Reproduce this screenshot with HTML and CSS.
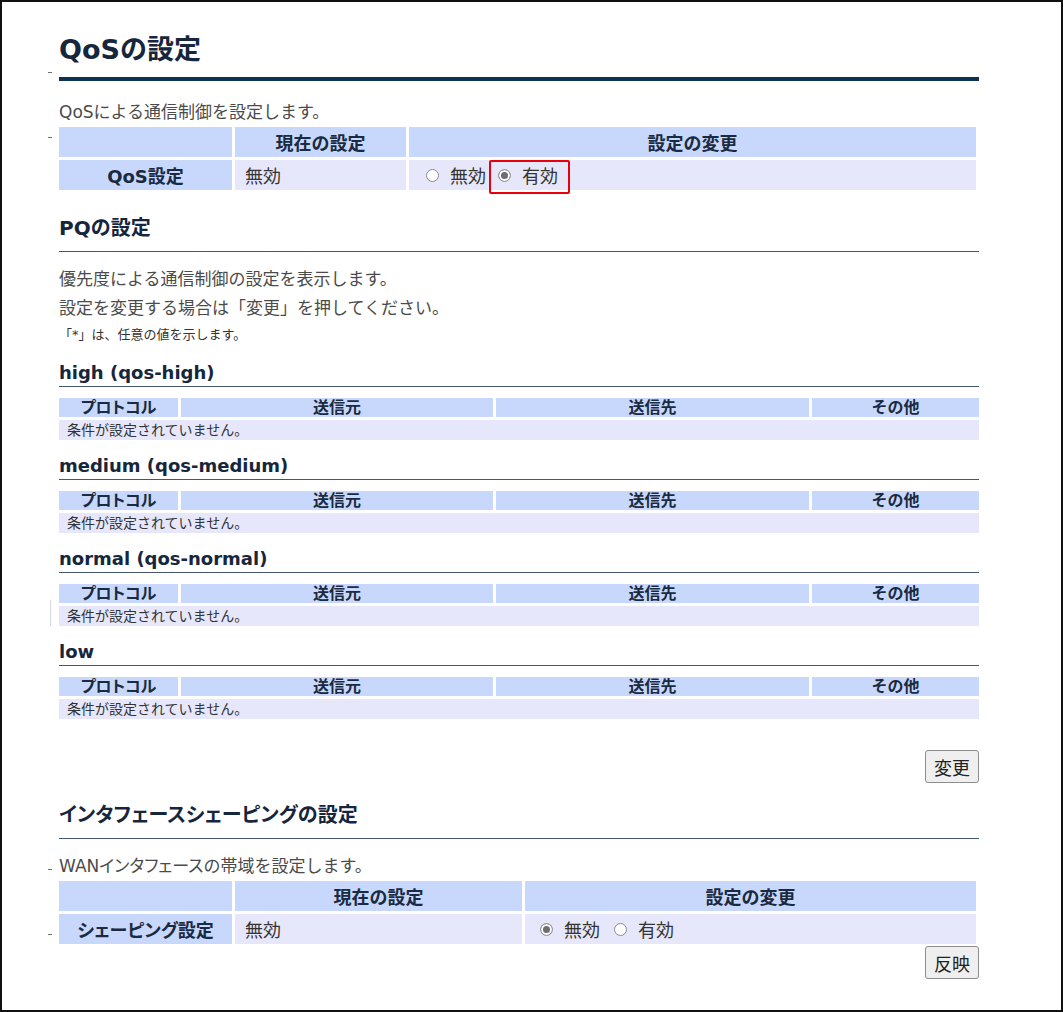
FILE: index.html
```html
<!DOCTYPE html>
<html lang="ja">
<head>
<meta charset="utf-8">
<title>QoSの設定</title>
<link rel="stylesheet" href="styles.css">
</head>
<body>
<div class="frame">
  <main class="page">
    <h1 class="title"><span class="tick tick-title"></span>QoSの設定</h1>
    <p class="desc">QoSによる通信制御を設定します。</p>
    <table class="grid grid-qos">
      <colgroup><col class="q1"><col class="q2"><col class="q3"></colgroup>
      <tr class="hrow"><th><span class="tick tick-row"></span></th><th>現在の設定</th><th>設定の変更</th></tr>
      <tr class="drow">
        <th>QoS設定</th>
        <td>無効</td>
        <td>
          <div class="choices">
            <label class="opt"><input type="radio" name="qos">無効</label>
            <label class="opt highlight"><input type="radio" name="qos" checked>有効</label>
          </div>
        </td>
      </tr>
    </table>

    <h2 class="sub">PQの設定</h2>
    <p class="lines">優先度による通信制御の設定を表示します。<br>設定を変更する場合は「変更」を押してください。</p>
    <p class="note">「*」は、任意の値を示します。</p>

    <h3 class="level first">high (qos-high)</h3>
    <table class="grid grid-pq">
      <colgroup><col class="p1"><col class="p2"><col class="p3"><col class="p4"></colgroup>
      <tr class="hrow"><th><span class="kana">プロトコル</span></th><th>送信元</th><th>送信先</th><th>その他</th></tr>
      <tr class="drow"><td colspan="4">条件が設定されていません。</td></tr>
    </table>

    <h3 class="level">medium (qos-medium)</h3>
    <table class="grid grid-pq">
      <colgroup><col class="p1"><col class="p2"><col class="p3"><col class="p4"></colgroup>
      <tr class="hrow"><th><span class="kana">プロトコル</span></th><th>送信元</th><th>送信先</th><th>その他</th></tr>
      <tr class="drow"><td colspan="4">条件が設定されていません。</td></tr>
    </table>

    <h3 class="level">normal (qos-normal)</h3>
    <table class="grid grid-pq">
      <colgroup><col class="p1"><col class="p2"><col class="p3"><col class="p4"></colgroup>
      <tr class="hrow"><th><span class="kana">プロトコル</span></th><th>送信元</th><th>送信先</th><th>その他</th></tr>
      <tr class="drow"><td colspan="4"><span class="vline"></span>条件が設定されていません。</td></tr>
    </table>

    <h3 class="level">low</h3>
    <table class="grid grid-pq">
      <colgroup><col class="p1"><col class="p2"><col class="p3"><col class="p4"></colgroup>
      <tr class="hrow"><th><span class="kana">プロトコル</span></th><th>送信元</th><th>送信先</th><th>その他</th></tr>
      <tr class="drow"><td colspan="4">条件が設定されていません。</td></tr>
    </table>

    <div class="actions actions-change"><button type="button" class="btn">変更</button></div>

    <h2 class="sub sub-shaping"><span class="kana">インタフェースシェーピング</span>の設定</h2>
    <p class="desc desc-wan"><span class="tick tick-desc"></span>WAN<span class="kana">インタフェース</span>の帯域を設定します。</p>
    <table class="grid grid-shape">
      <colgroup><col class="s1"><col class="s2"><col class="s3"></colgroup>
      <tr class="hrow"><th></th><th>現在の設定</th><th>設定の変更</th></tr>
      <tr class="drow">
        <th><span class="tick tick-drow"></span><span class="kana">シェーピング</span>設定</th>
        <td>無効</td>
        <td>
          <div class="choices">
            <label class="opt"><input type="radio" name="shape" checked>無効</label>
            <label class="opt"><input type="radio" name="shape">有効</label>
          </div>
        </td>
      </tr>
    </table>
    <div class="actions actions-apply"><button type="button" class="btn">反映</button></div>
  </main>
</div>
</body>
</html>
```

FILE: styles.css
```css
html, body {
  margin: 0;
  padding: 0;
  background: #ffffff;
}

body {
  font-family: "DejaVu Sans", "Noto Sans CJK JP", sans-serif;
  color: #333333;
}

.kana {
  font-feature-settings: "palt";
}

.frame {
  box-sizing: border-box;
  width: 1063px;
  height: 1012px;
  border: 2px solid #111111;
  overflow: hidden;
}

.page {
  width: 920px;
  margin-left: 57px;
  padding-top: 30px;
}

.tick {
  position: absolute;
  left: -11px;
  width: 4px;
  height: 1px;
  background: #6f6f6f;
}

.title {
  position: relative;
  margin: 0;
  font-size: 27px;
  line-height: 36px;
  font-weight: bold;
  color: #15263d;
  padding-bottom: 9px;
  border-bottom: 4px solid #0f3152;
}

.tick-title { top: 40px; }

.desc {
  position: relative;
  margin: 20px 0 0;
  font-size: 17px;
  line-height: 22px;
  color: #4b4b4b;
}

.tick-desc { top: 14px; }

.grid {
  border-spacing: 3px;
  margin-left: -3px;
  table-layout: fixed;
  margin-top: 1px;
}

.grid th,
.grid td {
  padding: 0;
  position: relative;
}

.grid .hrow th,
.grid .drow th {
  background: #c8d8fc;
  color: #1a2a40;
  font-weight: bold;
  text-align: center;
}

.grid .drow td {
  background: #e7e7fc;
  color: #333333;
  text-align: left;
}

.grid-qos,
.grid-shape {
  width: 923px;
  font-size: 18px;
}

.grid-qos .hrow th,
.grid-qos .drow th,
.grid-qos .drow td,
.grid-shape .hrow th,
.grid-shape .drow th,
.grid-shape .drow td {
  height: 30px;
}

.grid-qos .drow td,
.grid-shape .drow td {
  padding-left: 10px;
}

.q1 { width: 173px; }
.q2 { width: 171px; }
.q3 { width: 567px; }

.s1 { width: 173px; }
.s2 { width: 287px; }
.s3 { width: 451px; }

.tick-row { top: 10px; }
.tick-drow { top: 20px; }

.choices {
  display: flex;
  align-items: center;
  height: 30px;
  margin-left: 7px;
}

.opt {
  display: flex;
  align-items: center;
  height: 30px;
  color: #333333;
}

.opt + .opt {
  margin-left: 3px;
}

.highlight {
  position: relative;
  padding: 0 12px 0 9px;
}

.highlight::after {
  content: "";
  position: absolute;
  left: 0;
  right: 0;
  top: 0;
  bottom: -4px;
  border: 2px solid #e8000b;
  border-radius: 2px;
}

.opt input {
  -webkit-appearance: none;
  appearance: none;
  box-sizing: border-box;
  width: 13px;
  height: 13px;
  margin: 0 11px 0 0;
  border: 1px solid #8a8a8a;
  border-radius: 50%;
  background: #ffffff;
}

.opt input:checked {
  background: #6e6e6e;
  box-shadow: inset 0 0 0 2px #ffffff;
  border-color: #9a9a9a;
}

.grid-shape .choices {
  margin-left: 5px;
}

.grid-shape .opt + .opt {
  margin-left: 14px;
}

.sub {
  margin: 21px 0 0;
  font-size: 20px;
  line-height: 28px;
  font-weight: bold;
  color: #15263d;
  padding-bottom: 9px;
  border-bottom: 1px solid #44566d;
}

.lines {
  margin: 13px 0 0;
  font-size: 17px;
  line-height: 29px;
  color: #4b4b4b;
}

.note {
  margin: 2px 0 0;
  font-size: 13px;
  line-height: 20px;
  color: #333333;
}

.level {
  margin: 11px 0 0;
  font-size: 18px;
  line-height: 24px;
  font-weight: bold;
  color: #15263d;
  padding-bottom: 1px;
  border-bottom: 1px solid #44566d;
}

.level.first {
  margin-top: 16px;
}

.grid-pq {
  width: 926px;
  margin-top: 8px;
}

.p1 { width: 119px; }
.p2 { width: 312px; }
.p3 { width: 313px; }
.p4 { width: 167px; }

.grid-pq .hrow th {
  height: 19px;
  font-size: 16px;
  line-height: 19px;
}

.grid-pq .drow td {
  height: 20px;
  font-size: 14px;
  line-height: 20px;
  padding-left: 8px;
}

.vline {
  position: absolute;
  left: -9px;
  top: -6px;
  width: 1px;
  height: 26px;
  background: #d4d8e8;
}

.actions {
  display: flex;
  justify-content: flex-end;
}

.actions-change {
  margin-top: 28px;
}

.actions-apply {
  margin-top: -1px;
}

.btn {
  box-sizing: border-box;
  width: 54px;
  height: 33px;
  padding: 0;
  font-family: "DejaVu Sans", "Noto Sans CJK JP", sans-serif;
  font-size: 18px;
  color: #222222;
  background: #efefef;
  border: 1px solid #8d8d8d;
  border-radius: 3px;
}

.sub-shaping {
  margin-top: 18px;
}

.desc-wan {
  margin-top: 16px;
}

.grid-shape {
  margin-top: 1px;
}
```
